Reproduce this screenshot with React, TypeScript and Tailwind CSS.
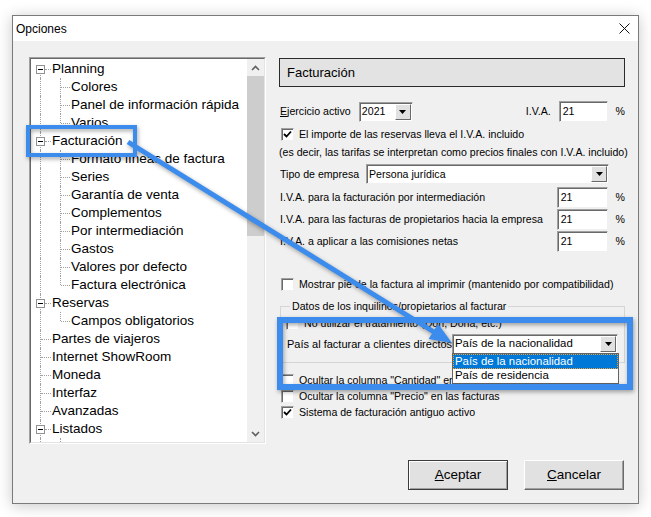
import React from 'react';

type Node = { t: string; l: 0 | 1; box?: boolean; first?: boolean; last?: boolean };

const TREE: Node[] = [
  { t: 'Planning', l: 0, box: true, first: true },
  { t: 'Colores', l: 1 },
  { t: 'Panel de información rápida', l: 1 },
  { t: 'Varios', l: 1, last: true },
  { t: 'Facturación', l: 0, box: true },
  { t: 'Formato líneas de factura', l: 1 },
  { t: 'Series', l: 1 },
  { t: 'Garantía de venta', l: 1 },
  { t: 'Complementos', l: 1 },
  { t: 'Por intermediación', l: 1 },
  { t: 'Gastos', l: 1 },
  { t: 'Valores por defecto', l: 1 },
  { t: 'Factura electrónica', l: 1, last: true },
  { t: 'Reservas', l: 0, box: true },
  { t: 'Campos obligatorios', l: 1, last: true },
  { t: 'Partes de viajeros', l: 0 },
  { t: 'Internet ShowRoom', l: 0 },
  { t: 'Moneda', l: 0 },
  { t: 'Interfaz', l: 0 },
  { t: 'Avanzadas', l: 0 },
  { t: 'Listados', l: 0, box: true },
  { t: 'Consultas', l: 1 },
];

const sunken =
  'border border-t-[#a0a0a0] border-l-[#a0a0a0] border-b-[#f0f0f0] border-r-[#f0f0f0] shadow-[inset_1px_1px_0_#696969] bg-white';

function TreeRow({ n }: { n: Node }) {
  return (
    <div className="relative h-[18px] flex items-center whitespace-nowrap">
      <span
        className={`absolute left-[9px] ${n.first ? 'top-[9px]' : 'top-0'} bottom-0 border-l border-dotted border-[#a0a0a0]`}
      />
      {n.l === 1 && (
        <>
          <span
            className={`absolute left-[29px] top-0 ${n.last ? 'h-[9px]' : 'bottom-0'} border-l border-dotted border-[#a0a0a0]`}
          />
          <span className="absolute left-[30px] top-[9px] w-[9px] border-t border-dotted border-[#a0a0a0]" />
        </>
      )}
      {n.l === 0 && !n.box && (
        <span className="absolute left-[10px] top-[9px] w-[10px] border-t border-dotted border-[#a0a0a0]" />
      )}
      {n.l === 0 && n.box && (
        <>
          <span className="absolute left-[5px] top-[5px] w-[9px] h-[9px] bg-white border border-[#919191] flex items-center justify-center">
            <span className="w-[5px] h-px bg-black" />
          </span>
          <span className="absolute left-[14px] top-[9px] w-[6px] border-t border-dotted border-[#a0a0a0]" />
        </>
      )}
      <span className={n.l === 0 ? 'ml-[21px]' : 'ml-[40px]'}>{n.t}</span>
    </div>
  );
}

function Check({ on }: { on?: boolean }) {
  return (
    <span className={`w-[13px] h-[13px] shrink-0 flex items-center justify-center ${sunken}`}>
      {on && (
        <svg width="9" height="9" viewBox="0 0 9 9">
          <polyline points="1,4 3.5,6.5 8,1.5" fill="none" stroke="#000" strokeWidth="1.8" />
        </svg>
      )}
    </span>
  );
}

function Arrow() {
  return (
    <span className="w-[16px] h-full bg-[#e1e1e1] border border-t-white border-l-white border-b-[#696969] border-r-[#696969] flex items-center justify-center">
      <svg width="7" height="4" viewBox="0 0 7 4">
        <polygon points="0,0 7,0 3.5,4" fill="#000" />
      </svg>
    </span>
  );
}

function Combo({ w, value, big }: { w: string; value: string; big?: boolean }) {
  return (
    <div className={`${w} h-[20px] flex items-center ${sunken} p-[1px] pl-[2px]`}>
      <span className={`flex-1 whitespace-nowrap ${big ? 'text-[11.4px]' : ''}`}>{value}</span>
      <Arrow />
    </div>
  );
}

function Field({ w, value }: { w: string; value: string }) {
  return <div className={`${w} h-[21px] flex items-center pl-[3px] ${sunken}`}>{value}</div>;
}

function CheckRow({ on, text, cls }: { on?: boolean; text: string; cls: string }) {
  return (
    <div className={`h-[16px] flex items-center ${cls}`}>
      <Check on={on} />
      <span className="ml-[5px] whitespace-nowrap">{text}</span>
    </div>
  );
}

function IvaRow({ text, cls }: { text: string; cls: string }) {
  return (
    <div className={`h-[21px] flex items-center ${cls}`}>
      <span className="w-[278px] pl-[1px]">{text}</span>
      <Field w="w-[51px]" value="21" />
      <span className="ml-[8px]">%</span>
    </div>
  );
}

export default function App() {
  return (
    <div className="relative w-[651px] h-[517px] bg-white overflow-hidden font-['Liberation_Sans',Arial,sans-serif] text-black">
      <div className="ml-[12px] mt-[15px] w-[627px] h-[489px] border border-[#7a7a7a] shadow-[0_2px_14px_rgba(0,0,0,0.22)] flex flex-col">
        {/* title bar */}
        <div className="h-[25px] bg-white flex items-center pl-[3px] pr-[8px] text-[12px]">
          <span>Opciones</span>
          <svg className="ml-auto" width="11" height="11" viewBox="0 0 11 11">
            <path d="M0.5 0.5 L10.5 10.5 M10.5 0.5 L0.5 10.5" stroke="#111" strokeWidth="1" />
          </svg>
        </div>

        <div className="flex-1 bg-[#f0f0f0] pl-[16px] pt-[16px] pr-[13px]">
          <div className="flex">
            {/* tree */}
            <div className="w-[238px] h-[387px] border border-t-[#a0a0a0] border-l-[#a0a0a0] border-b-white border-r-white">
              <div className="h-full border border-t-[#696969] border-l-[#696969] border-b-[#e3e3e3] border-r-[#e3e3e3] bg-white flex">
                <div className="flex-1 overflow-hidden text-[13.5px] pt-[1px]">
                  {TREE.map((n) => (
                    <TreeRow key={n.t} n={n} />
                  ))}
                </div>
                <div className="w-[17px] bg-[#f0f0f0] flex flex-col">
                  <div className="h-[17px] flex items-center justify-center">
                    <svg width="9" height="6" viewBox="0 0 9 6">
                      <polyline points="1,5 4.5,1.5 8,5" fill="none" stroke="#606060" strokeWidth="1.6" />
                    </svg>
                  </div>
                  <div className="h-[160px] bg-[#cdcdcd]" />
                  <div className="flex-1" />
                  <div className="h-[17px] flex items-center justify-center">
                    <svg width="9" height="6" viewBox="0 0 9 6">
                      <polyline points="1,1 4.5,4.5 8,1" fill="none" stroke="#606060" strokeWidth="1.6" />
                    </svg>
                  </div>
                </div>
              </div>
            </div>

            {/* right panel */}
            <div className="w-[346px] ml-[13px] mt-[1px] text-[10.6px] leading-none">
              <div className="h-[29px] border border-[#2b2b2b] bg-[#e3e3e3] flex items-center pl-[7px] text-[13px]">
                Facturación
              </div>

              <div className="mt-[14px] h-[21px] flex items-center">
                <span className="w-[80px] pl-[1px]">
                  <span className="underline">E</span>jercicio activo
                </span>
                <Combo w="w-[54px]" value="2021" />
                <span className="ml-[113px] w-[33px]">I.V.A.</span>
                <Field w="w-[49px]" value="21" />
                <span className="ml-[8px]">%</span>
              </div>

              <CheckRow on cls="mt-[4px] ml-[2px]" text="El importe de las reservas lleva el I.V.A. incluido" />
              <div className="h-[16px] mt-[2px] flex items-center whitespace-nowrap">
                (es decir, las tarifas se interpretan como precios finales con I.V.A. incluido)
              </div>

              <div className="mt-[4px] h-[20px] flex items-center">
                <span className="w-[87px] pl-[1px]">Tipo de empresa</span>
                <Combo w="w-[243px]" value="Persona jurídica" />
              </div>

              <IvaRow cls="mt-[3px]" text="I.V.A. para la facturación por intermediación" />
              <IvaRow cls="mt-[1px]" text="I.V.A. para las facturas de propietarios hacia la empresa" />
              <IvaRow cls="mt-[1px]" text="I.V.A. a aplicar a las comisiones netas" />

              <CheckRow cls="mt-[24px] ml-[2px]" text="Mostrar pie de la factura al imprimir (mantenido por compatibilidad)" />

              <fieldset className="mt-[7px] ml-[1px] w-[345px] border border-[#d5d5d5] pb-[8px]">
                <legend className="ml-[9px] px-[2px] leading-[14px] bg-[#f0f0f0]">
                  Datos de los inquilinos/propietarios al facturar
                </legend>
                <CheckRow cls="mt-[2px] ml-[5px]" text="No utilizar el tratamiento (Don, Doña, etc.)" />
                <div className="mt-[3px] h-[20px] flex items-center">
                  <span className="w-[171px] pl-[6px] text-[11px] whitespace-nowrap">País al facturar a clientes directos</span>
                  <Combo w="w-[166px]" value="País de la nacionalidad" big />
                </div>
              </fieldset>

              <CheckRow cls="mt-[9px] ml-[2px]" text='Ocultar la columna "Cantidad" en las facturas' />
              <CheckRow cls="ml-[2px]" text='Ocultar la columna "Precio" en las facturas' />
              <CheckRow on cls="ml-[2px]" text="Sistema de facturación antiguo activo" />
            </div>
          </div>

          {/* buttons */}
          <div className="mt-[16px] flex justify-end gap-[16px] pr-[1px] text-[13.5px]">
            <button className="w-[100px] h-[30px] bg-[#e1e1e1] border border-[#3c3c3c] shadow-[inset_1px_1px_0_#ffffff,inset_-1px_-1px_0_#a0a0a0]">
              <span className="underline">A</span>ceptar
            </button>
            <button className="w-[100px] h-[30px] bg-[#e1e1e1] border border-t-white border-l-white border-b-[#696969] border-r-[#696969] shadow-[inset_-1px_-1px_0_#a0a0a0]">
              <span className="underline">C</span>ancelar
            </button>
          </div>
        </div>
      </div>

      {/* open dropdown list */}
      <div className="absolute left-[452px] top-[353px] w-[167px] bg-white border border-[#646464] text-[11.4px] leading-none">
        <div className="h-[15px] bg-[#0078d7] text-white flex items-center pl-[2px] outline-1 outline-dotted outline-[#f0a030] -outline-offset-1">
          País de la nacionalidad
        </div>
        <div className="h-[14px] flex items-center pl-[2px]">País de residencia</div>
      </div>

      {/* annotation overlay */}
      <svg
        className="absolute left-0 top-0 pointer-events-none drop-shadow-[1px_2px_2px_rgba(0,0,0,0.35)]"
        width="651"
        height="517"
        viewBox="0 0 651 517"
      >
        <rect x="28" y="127" width="107" height="28" fill="none" stroke="#3b8ced" strokeWidth="4" />
        <rect x="280" y="320" width="350" height="67" fill="none" stroke="#3b8ced" strokeWidth="6" />
        <line x1="128" y1="142" x2="434" y2="332" stroke="#3b8ced" strokeWidth="5" />
        <polygon points="452,343 428.6,339.1 438,323.7" fill="#3b8ced" />
      </svg>
    </div>
  );
}
